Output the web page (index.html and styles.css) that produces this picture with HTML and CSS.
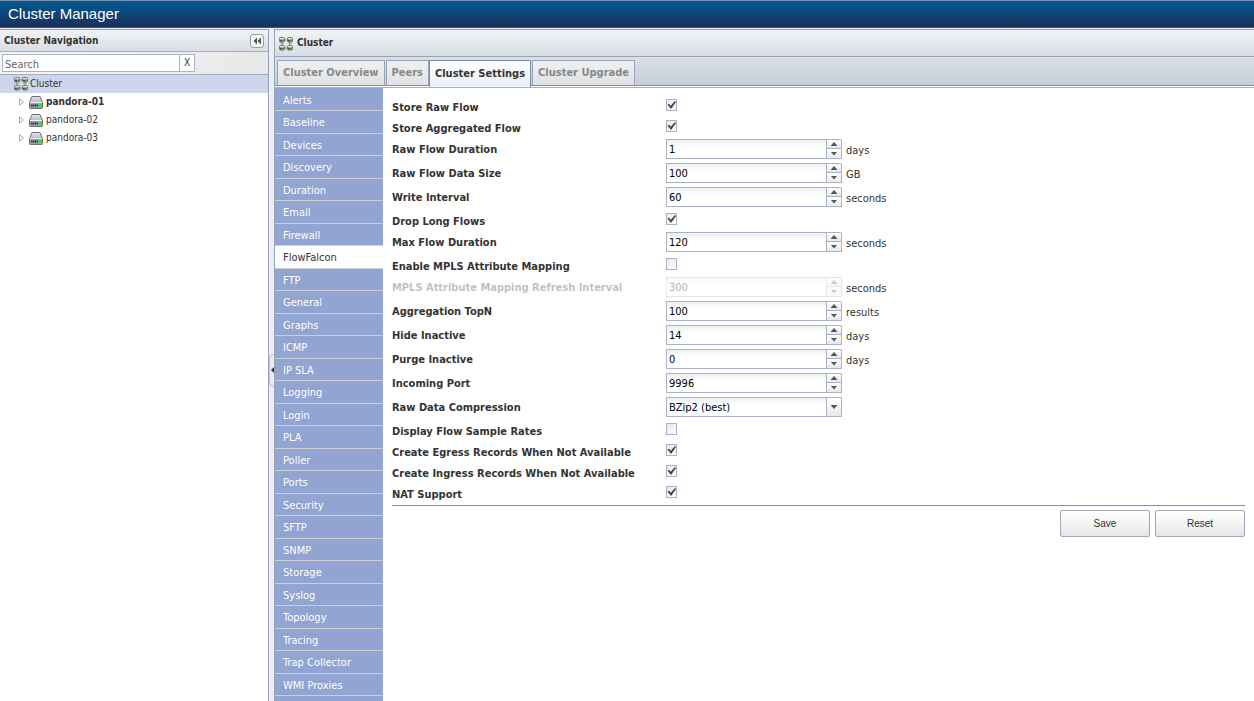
FILE: index.html
```
<!DOCTYPE html>
<html lang="en"><head><meta charset="utf-8"><title>Cluster Manager</title><link rel="stylesheet" href="styles.css"></head>
<body>
<svg width="0" height="0" class="defs" aria-hidden="true">
<defs>
<linearGradient id="metal" x1="0" y1="0" x2="0" y2="1"><stop offset="0" stop-color="#e4e6ea"/><stop offset="1" stop-color="#8b8f98"/></linearGradient>
<symbol id="node" viewBox="0 0 6 6"><rect x=".5" y=".5" width="5" height="4.6" rx="1" fill="#a5a8a3" stroke="#777c77"/><rect x="1" y="1" width="4" height="1" fill="#dfe2dd"/><rect x="1" y="3" width="2" height="1.5" fill="#4c504c"/><rect x="3" y="3" width="2" height="1.5" fill="#5a9a28"/></symbol>
<symbol id="cluster" viewBox="0 0 14 14"><path d="M3 5v5M11 5v5M5 3h4M5 11h4" stroke="#77817c" fill="none"/><path d="M1.500 6.500h3M1.500 8.500h3M9.500 6.500h3M9.500 8.500h3" stroke="#a4aaa6" fill="none"/><use href="#node" x="0" y="0" width="6" height="6"/><use href="#node" x="8" y="0" width="6" height="6"/><use href="#node" x="0" y="8" width="6" height="6"/><use href="#node" x="8" y="8" width="6" height="6"/></symbol>
<symbol id="server" viewBox="0 0 14 13"><path d="M3 .5h8l2.500 6v5q0 1-1 1h-11q-1 0-1-1v-5z" fill="url(#metal)" stroke="#6d7078"/><path d="M1 6.500h12" stroke="#eceef1"/><rect x="1" y="7" width="12" height="5" fill="#9da0a8"/><path d="M2 9.500h7" stroke="#33363c" stroke-width="2" stroke-dasharray="1.500 .5"/><rect x="9.500" y="8" width="3.500" height="3.500" fill="#2fe335"/></symbol>
</defs></svg>
<header class="app-header"><h1>Cluster Manager</h1></header>
<div class="workspace">
<aside class="nav">
<div class="nav-title"><h2>Cluster Navigation</h2><button class="collapse" aria-label="Collapse navigation"><svg width="8" height="8" viewBox="0 0 8 8"><path d="M4 .5v7L.5 4zM8 .5v7L4.500 4z" fill="#555"/></svg></button></div>
<div class="nav-search"><input type="text" placeholder="Search" aria-label="Search"><button aria-label="Clear">X</button></div>
<ul class="tree">
<li class="root"><svg class="cluster-icon"><use href="#cluster"/></svg><span>Cluster</span></li>
<li class="leaf current"><svg class="arrow" viewBox="0 0 5 8"><path d="M.5 .8v6.400L4.500 4z"/></svg><svg class="server-icon"><use href="#server"/></svg><span>pandora-01</span></li>
<li class="leaf"><svg class="arrow" viewBox="0 0 5 8"><path d="M.5 .8v6.400L4.500 4z"/></svg><svg class="server-icon"><use href="#server"/></svg><span>pandora-02</span></li>
<li class="leaf"><svg class="arrow" viewBox="0 0 5 8"><path d="M.5 .8v6.400L4.500 4z"/></svg><svg class="server-icon"><use href="#server"/></svg><span>pandora-03</span></li>
</ul>
</aside>
<div class="splitter"><button aria-label="Toggle navigation"><svg width="3" height="6" viewBox="0 0 3 6"><path d="M3 0v6L0 3z" fill="#333"/></svg></button></div>
<main class="panel">
<div class="panel-title"><svg class="cluster-icon"><use href="#cluster"/></svg><h2>Cluster</h2></div>
<div class="tabs"><button>Cluster Overview</button><button>Peers</button><button class="active">Cluster Settings</button><button>Cluster Upgrade</button></div>
<div class="panel-body">
<nav class="menu">
<a href="#">Alerts</a><a href="#">Baseline</a><a href="#">Devices</a><a href="#">Discovery</a><a href="#">Duration</a><a href="#">Email</a><a href="#">Firewall</a><a href="#" class="selected">FlowFalcon</a><a href="#">FTP</a><a href="#">General</a><a href="#">Graphs</a><a href="#">ICMP</a><a href="#">IP SLA</a><a href="#">Logging</a><a href="#">Login</a><a href="#">PLA</a><a href="#">Poller</a><a href="#">Ports</a><a href="#">Security</a><a href="#">SFTP</a><a href="#">SNMP</a><a href="#">Storage</a><a href="#">Syslog</a><a href="#">Topology</a><a href="#">Tracing</a><a href="#">Trap Collector</a><a href="#">WMI Proxies</a>
</nav>
<form class="settings">
<div class="check"><label for="f1">Store Raw Flow</label><input id="f1" type="checkbox" checked></div>
<div class="check"><label for="f2">Store Aggregated Flow</label><input id="f2" type="checkbox" checked></div>
<div class="field"><label for="f3">Raw Flow Duration</label><span class="spin"><input id="f3" type="text" value="1"><button type="button" class="up" aria-label="Increase"></button><button type="button" class="down" aria-label="Decrease"></button></span><span class="unit">days</span></div>
<div class="field"><label for="f4">Raw Flow Data Size</label><span class="spin"><input id="f4" type="text" value="100"><button type="button" class="up" aria-label="Increase"></button><button type="button" class="down" aria-label="Decrease"></button></span><span class="unit">GB</span></div>
<div class="field"><label for="f5">Write Interval</label><span class="spin"><input id="f5" type="text" value="60"><button type="button" class="up" aria-label="Increase"></button><button type="button" class="down" aria-label="Decrease"></button></span><span class="unit">seconds</span></div>
<div class="check"><label for="f6">Drop Long Flows</label><input id="f6" type="checkbox" checked></div>
<div class="field"><label for="f7">Max Flow Duration</label><span class="spin"><input id="f7" type="text" value="120"><button type="button" class="up" aria-label="Increase"></button><button type="button" class="down" aria-label="Decrease"></button></span><span class="unit">seconds</span></div>
<div class="check"><label for="f8">Enable MPLS Attribute Mapping</label><input id="f8" type="checkbox"></div>
<div class="field off"><label for="f9">MPLS Attribute Mapping Refresh Interval</label><span class="spin"><input id="f9" type="text" value="300" disabled><button type="button" class="up" aria-label="Increase" disabled></button><button type="button" class="down" aria-label="Decrease" disabled></button></span><span class="unit">seconds</span></div>
<div class="field"><label for="f10">Aggregation TopN</label><span class="spin"><input id="f10" type="text" value="100"><button type="button" class="up" aria-label="Increase"></button><button type="button" class="down" aria-label="Decrease"></button></span><span class="unit">results</span></div>
<div class="field"><label for="f11">Hide Inactive</label><span class="spin"><input id="f11" type="text" value="14"><button type="button" class="up" aria-label="Increase"></button><button type="button" class="down" aria-label="Decrease"></button></span><span class="unit">days</span></div>
<div class="field"><label for="f12">Purge Inactive</label><span class="spin"><input id="f12" type="text" value="0"><button type="button" class="up" aria-label="Increase"></button><button type="button" class="down" aria-label="Decrease"></button></span><span class="unit">days</span></div>
<div class="field"><label for="f13">Incoming Port</label><span class="spin"><input id="f13" type="text" value="9996"><button type="button" class="up" aria-label="Increase"></button><button type="button" class="down" aria-label="Decrease"></button></span></div>
<div class="field"><label for="f14">Raw Data Compression</label><span class="combo"><select id="f14"><option>BZip2 (best)</option></select><span class="trigger"></span></span></div>
<div class="check"><label for="f15">Display Flow Sample Rates</label><input id="f15" type="checkbox"></div>
<div class="check"><label for="f16">Create Egress Records When Not Available</label><input id="f16" type="checkbox" checked></div>
<div class="check"><label for="f17">Create Ingress Records When Not Available</label><input id="f17" type="checkbox" checked></div>
<div class="check"><label for="f18">NAT Support</label><input id="f18" type="checkbox" checked></div>
<div class="actions"><button type="button">Save</button><button type="button">Reset</button></div>
</form>
</div>
</main>
</div>
</body></html>
```
FILE: styles.css
```
* { box-sizing: border-box; }
body { margin: 0; height: 100vh; display: flex; flex-direction: column; overflow: hidden; background: #ebeff3; color: #333; font: 11px/14px "DejaVu Sans Condensed", "DejaVu Sans", sans-serif; }
h1, h2 { margin: 0; }
h2 { font-size: 10px; line-height: 14px; }
button, input, select { margin: 0; padding: 0; border-radius: 0; font: inherit; color: inherit; appearance: none; }
.defs { position: absolute; }
.app-header { flex: none; height: 28px; padding: 4px 8px; border-top: 1px solid #7e93ad; border-bottom: 1px solid #2d5a98; background: linear-gradient(#005a93, #19305a); }
.app-header h1 { color: #fff; font: 15px/17px "Liberation Sans", Arial, sans-serif; }
.workspace { flex: 1; min-height: 0; display: flex; padding-top: 1px; }

.nav { width: 269px; flex: none; background: #fff; border: 1px solid #99a3b8; border-width: 1px 1px 0 0; }
.nav-title { display: flex; align-items: center; justify-content: space-between; height: 22px; padding: 0 4px; border-bottom: 1px solid #a5adbf; background: linear-gradient(#f2f4f6, #d8dde5); }
.collapse { display: grid; place-items: center; width: 14px; height: 14px; border: 1px solid #9b9ea8; border-radius: 3px; background: #f4f5f7; }
.nav-search { display: flex; height: 23px; padding: 2px; border-bottom: 1px solid #a5adbf; background: linear-gradient(90deg, #f5f5f5, #e8e8e8); }
.nav-search input { width: 178px; height: 18px; padding: 2px 2px 0; border: 1px solid #abb1c6; background: #fff; }
.nav-search input::placeholder { color: #666; }
.nav-search button { width: 15px; height: 18px; border: 1px solid #abb1c6; border-left: 0; background: #fff; font-size: 10px; }
.tree { margin: 0; padding: 0; list-style: none; font-size: 10px; }
.tree li { display: flex; align-items: center; height: 18px; }
.tree .root { gap: 2px; padding-left: 14px; background: #cdd7eb; }
.tree .leaf { padding-left: 19px; }
.tree .current { font-weight: bold; }
.cluster-icon { width: 14px; height: 14px; flex: none; }
.arrow { width: 5px; height: 8px; margin-right: 5px; fill: #fff; stroke: #aaa; }
.server-icon { width: 14px; height: 13px; margin-right: 3px; }

.splitter { width: 5px; flex: none; display: flex; align-items: center; }
.splitter button { display: grid; place-items: center; width: 5px; height: 33px; margin-top: 10px; border: 1px solid #c4c8ce; border-right: 0; border-radius: 4px 0 0 4px; background: #e9ebee; }

.panel { flex: 1; min-width: 0; display: flex; flex-direction: column; border: 1px solid #99a3b8; border-width: 1px 0 0 1px; }
.panel-title { flex: none; display: flex; align-items: center; gap: 4px; height: 27px; padding: 2px 4px 0; border-bottom: 1px solid #99a3b8; background: linear-gradient(#f2f4f6, #d8dde5); }
.panel-title h2 { padding-bottom: 3px; }
.tabs { flex: none; display: flex; gap: 1px; height: 31px; padding: 3px 2px 0; border-bottom: 1px solid #a5b3c6; background: linear-gradient(#d8dee7 0 3px, #c5ced9 28px, #7e8ca8 28px 29px, #fff 29px); }
.tabs button { height: 26px; padding: 0 5px; border: 1px solid #99a3b8; border-bottom-color: #7e8ca8; background: linear-gradient(#eef0f1, #dfe2e6); color: #888; font-weight: bold; }
.tabs .active { height: 27px; margin-left: -1px; border-color: #7e8ca8; border-bottom: 0; background: linear-gradient(#fff, #e9eff5); color: #333; }
.panel-body { flex: 1; min-height: 0; display: flex; background: #fff; }
.menu { width: 108px; flex: none; padding-top: 1px; background: #92a4d2; overflow: hidden; }
.menu a { display: block; height: 22px; padding: 5px 8px 0; border-bottom: 1px solid #cbcfd3; color: #fff; text-decoration: none; }
.menu a:nth-child(even) { height: 23px; }
.menu a.selected { background: #fff; color: #333; }

.settings { flex: 1; min-width: 0; padding: 9px 9px 0; }
.check, .field { display: flex; align-items: flex-start; }
.check { height: 21px; }
.field { height: 24px; }
.settings label { width: 274px; padding-top: 4px; font-weight: bold; }
.check input { position: relative; width: 11px; height: 12px; margin-top: 2px; border: 1px solid #abb1c6; background: linear-gradient(135deg, #e8e8ea, #fff); }
.check input:checked::before { content: ""; position: absolute; inset: 1px 0; background: #444; clip-path: polygon(5% 45%, 22% 35%, 42% 60%, 88% 0, 100% 12%, 45% 100%); }
.spin { display: grid; grid-template: 10px 10px / 161px 15px; }
.spin input, .combo select { border: 1px solid #abb1c6; padding: 2px 2px 0; color: #000; background: linear-gradient(#eef0f0, #fff 7px); }
.spin input { grid-row: 1 / 3; width: 161px; }
.spin button, .trigger { display: grid; place-items: center; border: 1px solid #abb1c6; border-left: 0; background: linear-gradient(#fff, #e8eaea); }
.spin .up { border-radius: 0 2px 0 0; }
.spin .down { border-top: 0; }
.spin button::before, .trigger::before { content: ""; width: 7px; height: 4px; background: #555; clip-path: polygon(0 0, 100% 0, 50% 100%); }
.spin .up::before { clip-path: polygon(50% 0, 100% 100%, 0 100%); }
.unit { padding: 5px 0 0 4px; }
.off label, .off .spin { opacity: .3; }
.combo { position: relative; width: 176px; height: 20px; }
.combo select { width: 100%; height: 20px; }
.trigger { position: absolute; inset: 0 0 0 auto; width: 16px; border-left: 1px solid #abb1c6; pointer-events: none; }
.actions { display: flex; justify-content: flex-end; gap: 5px; padding-top: 4px; border-top: 1px solid #7b8fa8; }
.actions button { width: 90px; height: 27px; border: 1px solid #a1a9bb; border-radius: 2px; background: linear-gradient(#fff, #e6e8e8); font-family: "Liberation Sans", Arial, sans-serif; font-size: 10px; }
```
